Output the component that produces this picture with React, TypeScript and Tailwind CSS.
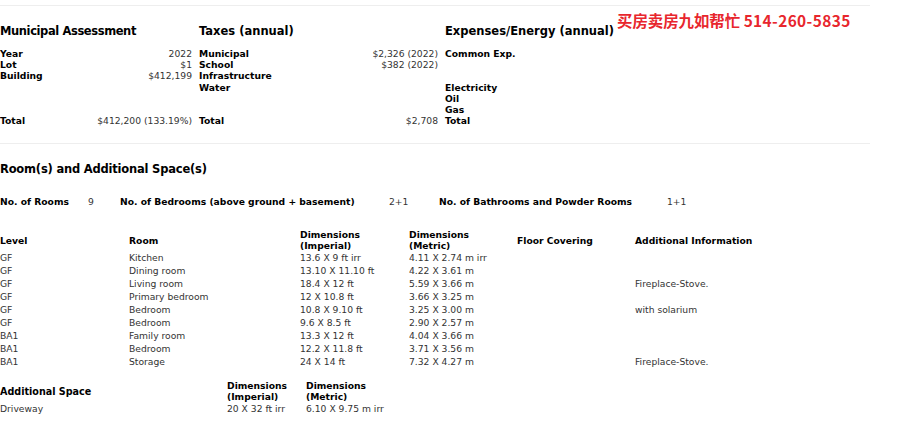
import React from 'react';

const rooms = [
  ['GF', 'Kitchen', '13.6 X 9 ft irr', '4.11 X 2.74 m irr', '', ''],
  ['GF', 'Dining room', '13.10 X 11.10 ft', '4.22 X 3.61 m', '', ''],
  ['GF', 'Living room', '18.4 X 12 ft', '5.59 X 3.66 m', '', 'Fireplace-Stove.'],
  ['GF', 'Primary bedroom', '12 X 10.8 ft', '3.66 X 3.25 m', '', ''],
  ['GF', 'Bedroom', '10.8 X 9.10 ft', '3.25 X 3.00 m', '', 'with solarium'],
  ['GF', 'Bedroom', '9.6 X 8.5 ft', '2.90 X 2.57 m', '', ''],
  ['BA1', 'Family room', '13.3 X 12 ft', '4.04 X 3.66 m', '', ''],
  ['BA1', 'Bedroom', '12.2 X 11.8 ft', '3.71 X 3.56 m', '', ''],
  ['BA1', 'Storage', '24 X 14 ft', '7.32 X 4.27 m', '', 'Fireplace-Stove.'],
];

const Row = ({ label, value }: { label?: string; value?: string }) => (
  <div className="flex justify-between h-[11.2px] leading-[11.2px]">
    <span className="font-bold text-black">{label}</span>
    <span className="text-[#333]">{value}</span>
  </div>
);

export default function App() {
  return (
    <div className="relative w-[900px] h-[426px] overflow-hidden bg-white text-[9.2px] text-[#333] font-['DejaVu_Sans',Verdana,sans-serif]">
      <div className="mt-[5px] h-px w-[870px] bg-[#eee]" />

      {/* top: assessment / taxes / expenses */}
      <div className="w-[870px] grid grid-cols-[192px_239px_1fr] gap-x-[7px] pt-[17px] pb-[17px] border-b border-[#eee]">
        <div>
          <h3 className="text-[11.5px] tracking-[-0.4px] font-bold text-black leading-[16px] mb-[9px]">Municipal Assessment</h3>
          <Row label="Year" value="2022" />
          <Row label="Lot" value="$1" />
          <Row label="Building" value="$412,199" />
          <Row />
          <Row />
          <Row />
          <Row label="Total" value="$412,200 (133.19%)" />
        </div>
        <div>
          <h3 className="text-[11.5px] font-bold text-black leading-[16px] mb-[9px]">Taxes (annual)</h3>
          <Row label="Municipal" value="$2,326 (2022)" />
          <Row label="School" value="$382 (2022)" />
          <Row label="Infrastructure" />
          <Row label="Water" />
          <Row />
          <Row />
          <Row label="Total" value="$2,708" />
        </div>
        <div>
          <h3 className="text-[11.5px] font-bold text-black leading-[16px] mb-[9px]">Expenses/Energy (annual)</h3>
          <Row label="Common Exp." />
          <Row />
          <Row />
          <Row label="Electricity" />
          <Row label="Oil" />
          <Row label="Gas" />
          <Row label="Total" />
        </div>
      </div>

      {/* rooms */}
      <h3 className="mt-[17px] text-[11.5px] tracking-[-0.2px] font-bold text-black leading-[16px]">Room(s) and Additional Space(s)</h3>

      <div className="mt-[19px] grid grid-cols-[88px_32px_269px_50px_228px_1fr] leading-[11px]">
        <span className="font-bold text-black">No. of Rooms</span>
        <span>9</span>
        <span className="font-bold text-black">No. of Bedrooms (above ground + basement)</span>
        <span>2+1</span>
        <span className="font-bold text-black">No. of Bathrooms and Powder Rooms</span>
        <span>1+1</span>
      </div>

      <div className="mt-[22px] grid grid-cols-[129px_171px_109px_108px_118px_1fr] leading-[11px]">
        <div className="font-bold text-black self-center">Level</div>
        <div className="font-bold text-black self-center">Room</div>
        <div className="font-bold text-black">Dimensions<br />(Imperial)</div>
        <div className="font-bold text-black">Dimensions<br />(Metric)</div>
        <div className="font-bold text-black self-center">Floor Covering</div>
        <div className="font-bold text-black self-center">Additional Information</div>
        {rooms.map((r, i) =>
          r.map((c, j) => (
            <div key={`${i}-${j}`} className="h-[13px] leading-[13px] whitespace-nowrap">
              {c}
            </div>
          ))
        )}
      </div>

      <div className="mt-[12px] grid grid-cols-[227px_79px_1fr] leading-[11px]">
        <div className="font-bold text-black self-center text-[9.6px]">Additional Space</div>
        <div className="font-bold text-black">Dimensions<br />(Imperial)</div>
        <div className="font-bold text-black">Dimensions<br />(Metric)</div>
        <div className="leading-[13px]">Driveway</div>
        <div className="leading-[13px]">20 X 32 ft irr</div>
        <div className="leading-[13px]">6.10 X 9.75 m irr</div>
      </div>

      <div className="absolute left-[617px] top-[10px] text-[15.4px] font-bold leading-[20px] text-[#e8262d] font-['Noto_Sans_CJK_SC',sans-serif] whitespace-nowrap">
        买房卖房九如帮忙 <span className="tracking-[0.4px]">514-260-5835</span>
      </div>
    </div>
  );
}
